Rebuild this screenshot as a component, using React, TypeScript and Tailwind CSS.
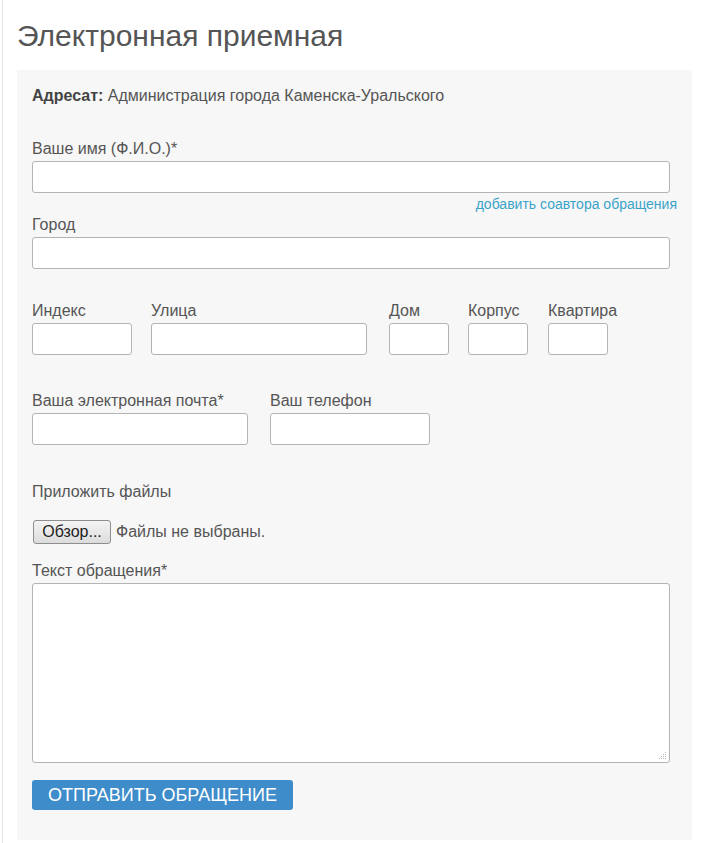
export default function App() {
  const input = "block h-[32px] rounded-[3px] border border-[#b4b4b4] bg-white";
  const label = "block text-[16px] leading-[20px] text-[#555] mb-[2px]";

  return (
    <div className="min-h-[843px] bg-white font-['Liberation_Sans',Arial,sans-serif]">
      <div className="ml-[2px] min-h-[843px] border-l border-[#e4e4e4] pl-[14px] pt-[18px]">
        <h1 className="text-[30px] leading-[36px] text-[#555] font-normal">Электронная приемная</h1>

        <div className="mt-[16px] w-[675px] bg-[#f7f7f7] pl-[15px] pt-[16px] pb-[30px]">
          <div className="text-[16px] leading-[20px] text-[#555]">
            <b className="text-[#444]">Адресат:</b> Администрация города Каменска-Уральского
          </div>

          <div className="mt-[33px] w-[645px]">
            <label className={label}>Ваше имя (Ф.И.О.)*</label>
            <div className={input + " w-[638px]"} />
            <div className="mt-[2px] text-right text-[14px] leading-[18px] text-[#3aa3c9]">добавить соавтора обращения</div>
          </div>

          <div className="mt-[2px]">
            <label className={label}>Город</label>
            <div className={input + " w-[638px]"} />
          </div>

          <div className="mt-[32px] flex items-start">
            <div>
              <label className={label}>Индекс</label>
              <div className={input + " w-[100px]"} />
            </div>
            <div className="ml-[19px]">
              <label className={label}>Улица</label>
              <div className={input + " w-[216px]"} />
            </div>
            <div className="ml-[22px]">
              <label className={label}>Дом</label>
              <div className={input + " w-[60px]"} />
            </div>
            <div className="ml-[19px]">
              <label className={label}>Корпус</label>
              <div className={input + " w-[60px]"} />
            </div>
            <div className="ml-[20px]">
              <label className={label}>Квартира</label>
              <div className={input + " w-[60px]"} />
            </div>
          </div>

          <div className="mt-[36px] flex items-start">
            <div>
              <label className={label}>Ваша электронная почта*</label>
              <div className={input + " w-[216px]"} />
            </div>
            <div className="ml-[22px]">
              <label className={label}>Ваш телефон</label>
              <div className={input + " w-[160px]"} />
            </div>
          </div>

          <div className="mt-[37px] text-[16px] leading-[20px] text-[#555]">Приложить файлы</div>

          <div className="mt-[18px] flex items-center">
            <button className="ml-[1px] h-[24px] w-[78px] rounded-[3px] border border-[#8e8e8e] bg-gradient-to-b from-[#f4f4f4] to-[#dcdcdc] text-[16px] leading-[20px] text-[#222]">
              Обзор...
            </button>
            <span className="ml-[5px] text-[16px] leading-[20px] text-[#555]">Файлы не выбраны.</span>
          </div>

          <div className="mt-[17px]">
            <label className={label}>Текст обращения*</label>
            <div className={input + " relative h-[180px] w-[638px]"}>
              <svg className="absolute right-[2px] bottom-[2px]" width="9" height="9" viewBox="0 0 9 9">
                <g fill="#b8b8b8">
                  <rect x="7" y="1" width="1" height="1" />
                  <rect x="5" y="3" width="1" height="1" />
                  <rect x="7" y="3" width="1" height="1" />
                  <rect x="3" y="5" width="1" height="1" />
                  <rect x="5" y="5" width="1" height="1" />
                  <rect x="7" y="5" width="1" height="1" />
                  <rect x="1" y="7" width="1" height="1" />
                  <rect x="3" y="7" width="1" height="1" />
                  <rect x="5" y="7" width="1" height="1" />
                  <rect x="7" y="7" width="1" height="1" />
                </g>
              </svg>
            </div>
          </div>

          <button className="mt-[17px] h-[30px] w-[261px] rounded-[3px] bg-[#3f8ccb] text-[18px] text-white">
            ОТПРАВИТЬ ОБРАЩЕНИЕ
          </button>
        </div>
      </div>
    </div>
  );
}
